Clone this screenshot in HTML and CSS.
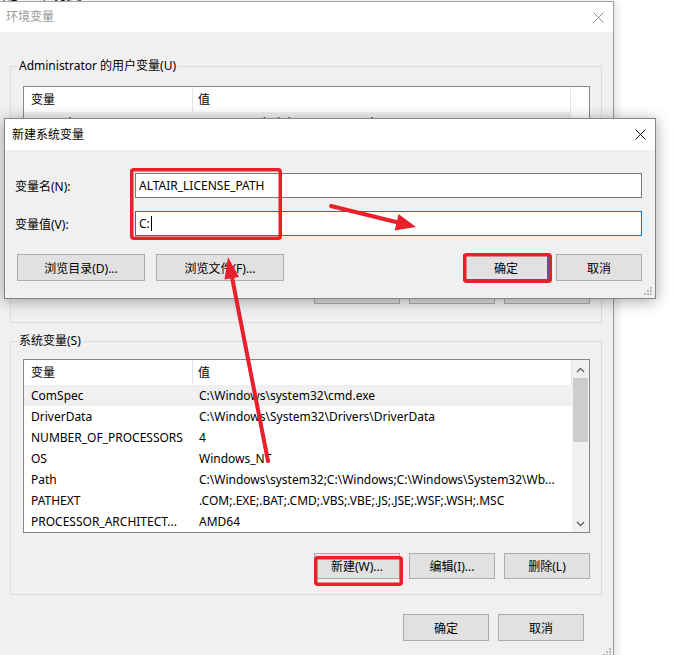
FILE: index.html
```html
<!DOCTYPE html>
<html lang="zh-CN">
<head>
  <meta charset="UTF-8" />
  <meta name="viewport" content="width=device-width, initial-scale=1.0"/>
  <title>环境变量</title>
  <link rel="stylesheet" href="styles.css">
</head>
<body>
  <div class="desk-text">配置环境变量</div>

  <!-- 环境变量 主窗口 -->
  <div class="window main-win">
    <div class="titlebar">
      <span class="title inactive">环境变量</span>
      <svg class="close-x" width="11" height="11" viewBox="0 0 11 11">
        <path d="M0.5 0.5 L10.5 10.5 M10.5 0.5 L0.5 10.5" stroke="#8c8c8c" stroke-width="1" fill="none"/>
      </svg>
    </div>

    <div class="win-body">
      <div class="group group-user">
        <div class="group-title">Administrator 的用户变量(U)</div>
        <div class="listview user-list">
          <div class="lv-main">
            <div class="lv-head">
              <div class="cell col-name">变量</div>
              <div class="cell col-val">值</div>
            </div>
            <div class="lv-row selected">
              <div class="cell col-name">OneDrive</div>
              <div class="cell col-val">C:\Users\Administrator\OneDrive</div>
            </div>
          </div>
        </div>
        <div class="btn-row">
          <button class="btn">新建(N)...</button>
          <button class="btn">编辑(E)...</button>
          <button class="btn">删除(D)</button>
        </div>
      </div>

      <div class="group group-sys">
        <div class="group-title">系统变量(S)</div>
        <div class="listview sys-list">
          <div class="lv-main">
            <div class="lv-head">
              <div class="cell col-name">变量</div>
              <div class="cell col-val">值</div>
            </div>
            <div class="lv-row selected">
              <div class="cell col-name">ComSpec</div>
              <div class="cell col-val">C:\Windows\system32\cmd.exe</div>
            </div>
            <div class="lv-row">
              <div class="cell col-name">DriverData</div>
              <div class="cell col-val">C:\Windows\System32\Drivers\DriverData</div>
            </div>
            <div class="lv-row">
              <div class="cell col-name">NUMBER_OF_PROCESSORS</div>
              <div class="cell col-val">4</div>
            </div>
            <div class="lv-row">
              <div class="cell col-name">OS</div>
              <div class="cell col-val">Windows_NT</div>
            </div>
            <div class="lv-row">
              <div class="cell col-name">Path</div>
              <div class="cell col-val">C:\Windows\system32;C:\Windows;C:\Windows\System32\Wb...</div>
            </div>
            <div class="lv-row">
              <div class="cell col-name">PATHEXT</div>
              <div class="cell col-val">.COM;.EXE;.BAT;.CMD;.VBS;.VBE;.JS;.JSE;.WSF;.WSH;.MSC</div>
            </div>
            <div class="lv-row">
              <div class="cell col-name">PROCESSOR_ARCHITECT...</div>
              <div class="cell col-val">AMD64</div>
            </div>
          </div>
          <div class="scrollbar">
            <svg class="sb-arrow" width="9" height="6" viewBox="0 0 9 6">
              <path d="M1 5 L4.5 1.5 L8 5" stroke="#606060" stroke-width="1.4" fill="none"/>
            </svg>
            <div class="sb-track"><div class="sb-thumb"></div></div>
            <svg class="sb-arrow" width="9" height="6" viewBox="0 0 9 6">
              <path d="M1 1 L4.5 4.5 L8 1" stroke="#606060" stroke-width="1.4" fill="none"/>
            </svg>
          </div>
        </div>
        <div class="btn-row">
          <button class="btn">新建(W)...</button>
          <button class="btn">编辑(I)...</button>
          <button class="btn">删除(L)</button>
        </div>
      </div>

      <div class="footer-row">
        <button class="btn">确定</button>
        <button class="btn">取消</button>
      </div>
    </div>
    <svg class="grip main-grip" width="8" height="8" viewBox="0 0 8 8">
      <rect x="6" y="0" width="2" height="2" fill="#bcbcbc"/>
      <rect x="3" y="3" width="2" height="2" fill="#bcbcbc"/>
      <rect x="6" y="3" width="2" height="2" fill="#bcbcbc"/>
      <rect x="0" y="6" width="2" height="2" fill="#bcbcbc"/>
      <rect x="3" y="6" width="2" height="2" fill="#bcbcbc"/>
      <rect x="6" y="6" width="2" height="2" fill="#bcbcbc"/>
    </svg>
  </div>

  <!-- 新建系统变量 对话框 -->
  <div class="window dialog">
    <div class="titlebar dlg-titlebar">
      <span class="title">新建系统变量</span>
      <svg class="close-x" width="11" height="11" viewBox="0 0 11 11">
        <path d="M0.5 0.5 L10.5 10.5 M10.5 0.5 L0.5 10.5" stroke="#111" stroke-width="1" fill="none"/>
      </svg>
    </div>
    <div class="dlg-body">
      <div class="form-row">
        <label class="form-label">变量名(N):</label>
        <div class="text-input">ALTAIR_LICENSE_PATH</div>
      </div>
      <div class="form-row">
        <label class="form-label">变量值(V):</label>
        <div class="text-input focused">C:<span class="caret"></span></div>
      </div>
      <div class="dlg-buttons">
        <button class="btn btn-wide">浏览目录(D)...</button>
        <button class="btn btn-wide">浏览文件(F)...</button>
        <span class="spacer"></span>
        <button class="btn btn-default">确定</button>
        <button class="btn">取消</button>
      </div>
    </div>
    <svg class="grip dlg-grip" width="8" height="8" viewBox="0 0 8 8">
      <rect x="6" y="0" width="2" height="2" fill="#bcbcbc"/>
      <rect x="3" y="3" width="2" height="2" fill="#bcbcbc"/>
      <rect x="6" y="3" width="2" height="2" fill="#bcbcbc"/>
      <rect x="0" y="6" width="2" height="2" fill="#bcbcbc"/>
      <rect x="3" y="6" width="2" height="2" fill="#bcbcbc"/>
      <rect x="6" y="6" width="2" height="2" fill="#bcbcbc"/>
    </svg>
  </div>

  <!-- 红色标注 -->
  <svg class="annotations" width="673" height="655" viewBox="0 0 673 655">
    <g fill="none" stroke="#e8202b" stroke-width="3.5">
      <rect x="131.75" y="169.75" width="148.5" height="68.5" rx="2"/>
      <rect x="464.75" y="254.75" width="85.5" height="26.5" rx="2"/>
      <rect x="315.75" y="557.75" width="85.5" height="26.5" rx="2"/>
    </g>
    <g stroke="#e8202b" stroke-width="4" stroke-linecap="round">
      <line x1="331" y1="206" x2="400" y2="223"/>
      <line x1="268" y1="461" x2="231" y2="272"/>
    </g>
    <g fill="#e8202b">
      <polygon points="416,227 394.7,230.5 398.5,214"/>
      <polygon points="228,257 239,277 224.5,279.5"/>
    </g>
  </svg>
</body>
</html>
```

FILE: styles.css
```css
body {
  margin: 0;
  width: 673px;
  height: 655px;
  position: relative;
  overflow: hidden;
  background-color: #fff;
  font-family: "Noto Sans", "Noto Sans CJK SC", sans-serif;
  font-size: 12px;
  color: #000;
}

.desk-text {
  position: absolute;
  left: 2px;
  top: -16px;
  font-size: 16px;
  line-height: 18px;
  color: #111;
}

.window {
  position: absolute;
  box-sizing: border-box;
  background-color: #f0f0f0;
}

.main-win {
  left: 0;
  top: 1px;
  width: 614px;
  height: 660px;
  border-top: 1px solid #a5a5a5;
  border-right: 1px solid #9c9c9c;
  box-shadow: 3px 0 8px rgba(0, 0, 0, 0.12);
}

.titlebar {
  height: 30px;
  background-color: #fff;
  display: flex;
  align-items: center;
  justify-content: space-between;
  padding: 0 9px 0 6px;
}

.title {
  line-height: 16px;
}

.title.inactive {
  color: #999;
}

.close-x {
  display: block;
}

/* group boxes */
.group {
  border: 1px solid #dcdcdc;
  margin: 0 11px 0 10px;
  padding: 0 11px 0 12px;
}

.group-user {
  margin-top: 34px;
  padding-bottom: 18px;
}

.group-sys {
  margin-top: 18px;
  padding-bottom: 15px;
}

.group-title {
  display: table;
  margin: -9px 0 0 -6px;
  padding: 0 2px;
  line-height: 16px;
  background-color: #f0f0f0;
}

/* list views */
.listview {
  display: flex;
  border: 1px solid #828790;
  background-color: #fff;
}

.user-list {
  margin-top: 12px;
  height: 172px;
  box-sizing: border-box;
  overflow: hidden;
}

.sys-list {
  margin-top: 10px;
  height: 174px;
  box-sizing: border-box;
}

.lv-main {
  flex: 1;
  min-width: 0;
}

.user-list .lv-main {
  padding-right: 18px;
}

.lv-head,
.lv-row {
  display: flex;
}

.lv-head {
  height: 25px;
  align-items: center;
}

.lv-row {
  height: 21px;
  align-items: center;
}

.lv-row.selected {
  background-color: #f0f0f0;
}

.cell {
  white-space: nowrap;
  overflow: hidden;
  box-sizing: border-box;
  line-height: 16px;
}

.col-name {
  width: 169px;
  flex: none;
  padding-left: 7px;
  padding-right: 2px;
}

.col-val {
  flex: 1;
  padding-left: 6px;
  padding-right: 2px;
}

.lv-head .cell {
  height: 25px;
  line-height: 25px;
  border-right: 1px solid #e5e5e5;
}

.lv-head .col-val {
  padding-left: 5px;
}

/* scrollbar */
.scrollbar {
  width: 17px;
  flex: none;
  background-color: #f0f0f0;
  display: flex;
  flex-direction: column;
  align-items: center;
}

.sb-arrow {
  display: block;
  margin: 7px 0 5px;
}

.sb-arrow:last-child {
  margin: 5px 0 5px;
}

.sb-track {
  flex: 1;
  width: 100%;
}

.sb-thumb {
  margin: 0 1px;
  height: 64px;
  background-color: #cdcdcd;
}

/* buttons */
.btn {
  box-sizing: border-box;
  width: 86px;
  height: 26px;
  padding: 0;
  background-color: #e1e1e1;
  border: 1px solid #adadad;
  font-family: inherit;
  font-size: 12px;
  color: #000;
}

.btn-row {
  display: flex;
  justify-content: flex-end;
  gap: 9px;
  margin-top: 20px;
}

.footer-row {
  display: flex;
  justify-content: flex-end;
  gap: 9px;
  margin: 19px 29px 0 0;
}

.footer-row .btn {
  height: 27px;
}

.grip {
  position: absolute;
  display: block;
}

.main-grip {
  right: 2px;
  top: 646px;
}

/* dialog */
.dialog {
  left: 4px;
  top: 118px;
  width: 652px;
  height: 181px;
  border: 1px solid #868686;
  box-shadow: 0 2px 14px rgba(0, 0, 0, 0.35);
}

.dlg-titlebar {
  height: 31px;
  padding: 0 9px 0 7px;
}

.dlg-body {
  padding: 23px 13px 0 0;
}

.form-row {
  display: flex;
  align-items: center;
  margin-bottom: 13px;
}

.form-label {
  width: 130px;
  padding-left: 10px;
  box-sizing: border-box;
  flex: none;
}

.text-input {
  flex: 1;
  box-sizing: border-box;
  height: 25px;
  line-height: 23px;
  padding-left: 3px;
  background-color: #fff;
  border: 1px solid #7a7a7a;
}

.text-input.focused {
  border-color: #0078d7;
}

.caret {
  display: inline-block;
  width: 1px;
  height: 15px;
  margin-left: 1px;
  vertical-align: -3px;
  background-color: #000;
}

.dlg-buttons {
  display: flex;
  gap: 7px;
  margin-top: 18px;
  padding-left: 12px;
}

.dlg-buttons .btn {
  height: 27px;
}

.dlg-buttons .btn-wide {
  width: 128px;
}

.dlg-buttons .btn-wide + .btn-wide {
  margin-left: 4px;
}

.spacer {
  flex: 1;
}

.btn-default {
  border-color: #0078d7;
  box-shadow: inset 0 0 0 1px #0078d7;
}

.dlg-grip {
  right: 3px;
  bottom: 3px;
}

.annotations {
  position: absolute;
  left: 0;
  top: 0;
  pointer-events: none;
}
```
